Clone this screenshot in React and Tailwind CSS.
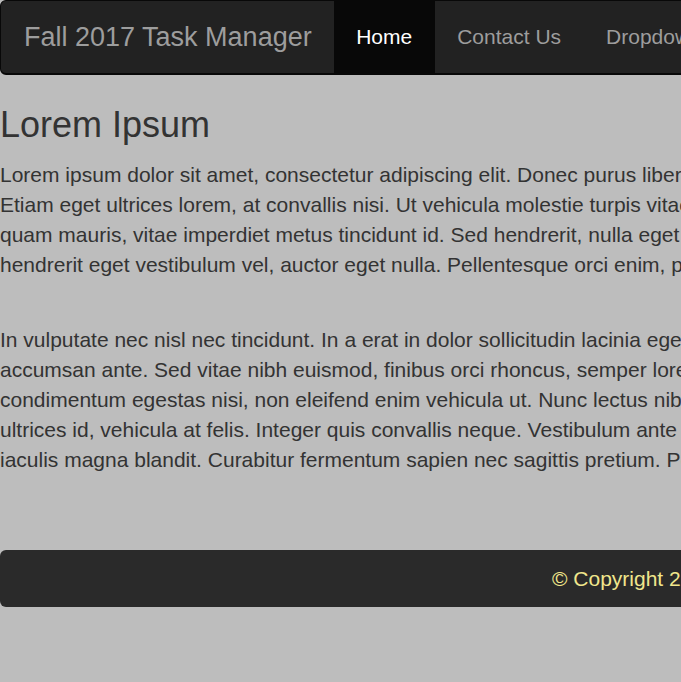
import React from 'react';

const para1 = [
  'Lorem ipsum dolor sit amet, consectetur adipiscing elit. Donec purus libero, sodales vel',
  'Etiam eget ultrices lorem, at convallis nisi. Ut vehicula molestie turpis vitae aliquet.',
  'quam mauris, vitae imperdiet metus tincidunt id. Sed hendrerit, nulla eget luctus',
  'hendrerit eget vestibulum vel, auctor eget nulla. Pellentesque orci enim, pharetra',
];

const para2 = [
  'In vulputate nec nisl nec tincidunt. In a erat in dolor sollicitudin lacinia eget non',
  'accumsan ante. Sed vitae nibh euismod, finibus orci rhoncus, semper lorem. Nulla',
  'condimentum egestas nisi, non eleifend enim vehicula ut. Nunc lectus nibh, dapibus',
  'ultrices id, vehicula at felis. Integer quis convallis neque. Vestibulum ante ipsum',
  'iaculis magna blandit. Curabitur fermentum sapien nec sagittis pretium. Pellentesque',
];

const App = () => {
  return (
    <div
      className="w-screen min-h-screen overflow-hidden bg-[#bdbdbd] text-[#333]"
      style={{ fontFamily: '"Liberation Sans", Arial, sans-serif' }}
    >
      <div className="w-[1400px]">
        {/* navbar */}
        <nav className="flex h-[75px] rounded-[6px] border border-b-2 border-[#080808] bg-[#222]">
          <a className="pl-[23px] pr-[22px] text-[27px] leading-[72px] text-[#9d9d9d]">
            Fall 2017 Task Manager
          </a>
          <ul className="flex">
            <li className="bg-[#080808] px-[22.5px] text-[21px] leading-[72px] text-white">Home</li>
            <li className="px-[22.5px] text-[21px] leading-[72px] text-[#9d9d9d]">Contact Us</li>
            <li className="px-[22.5px] text-[21px] leading-[72px] text-[#9d9d9d]">Dropdown</li>
          </ul>
        </nav>

        <main className="mt-[30px]">
          <h1 className="mb-[15px] text-[36px] leading-[40px]">Lorem Ipsum</h1>
          <p className="mb-[45px] text-[21px] leading-[30px]">
            {para1.map((line) => (
              <span key={line} className="block whitespace-nowrap">{line}</span>
            ))}
          </p>
          <p className="text-[21px] leading-[30px]">
            {para2.map((line) => (
              <span key={line} className="block whitespace-nowrap">{line}</span>
            ))}
          </p>
        </main>

        <footer className="mt-[75px] flex h-[57px] items-center rounded-[6px] bg-[#2a2a2a] pl-[552px] text-[21px] text-[#f0e68c]">
          © Copyright 2017 Fall Task Manager
        </footer>
      </div>
    </div>
  );
};

export default App;
